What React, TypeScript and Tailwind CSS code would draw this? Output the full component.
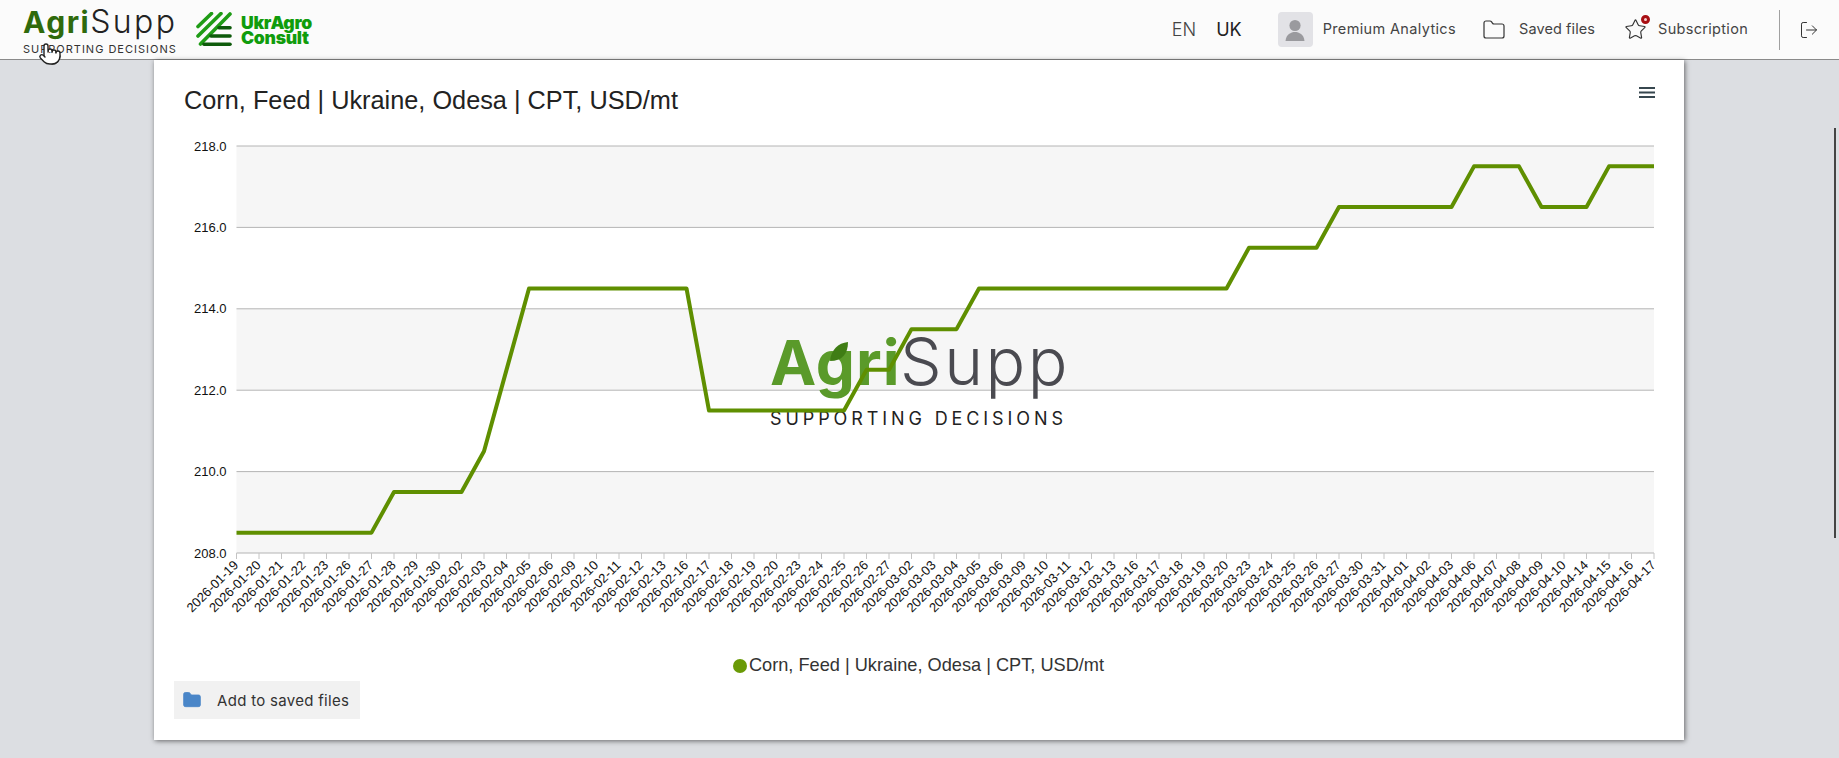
import { Pointer, LogOut, Folder, Star } from 'lucide-react';

const dates = [
  '2026-01-19', '2026-01-20', '2026-01-21', '2026-01-22', '2026-01-23', '2026-01-26', '2026-01-27', '2026-01-28',
  '2026-01-29', '2026-01-30', '2026-02-02', '2026-02-03', '2026-02-04', '2026-02-05', '2026-02-06', '2026-02-09',
  '2026-02-10', '2026-02-11', '2026-02-12', '2026-02-13', '2026-02-16', '2026-02-17', '2026-02-18', '2026-02-19',
  '2026-02-20', '2026-02-23', '2026-02-24', '2026-02-25', '2026-02-26', '2026-02-27', '2026-03-02', '2026-03-03',
  '2026-03-04', '2026-03-05', '2026-03-06', '2026-03-09', '2026-03-10', '2026-03-11', '2026-03-12', '2026-03-13',
  '2026-03-16', '2026-03-17', '2026-03-18', '2026-03-19', '2026-03-20', '2026-03-23', '2026-03-24', '2026-03-25',
  '2026-03-26', '2026-03-27', '2026-03-30', '2026-03-31', '2026-04-01', '2026-04-02', '2026-04-03', '2026-04-06',
  '2026-04-07', '2026-04-08', '2026-04-09', '2026-04-10', '2026-04-14', '2026-04-15', '2026-04-16', '2026-04-17',
];

const values = [
  208.5, 208.5, 208.5, 208.5, 208.5, 208.5, 208.5, 209.5, 209.5, 209.5, 209.5, 210.5, 212.5, 214.5, 214.5, 214.5,
  214.5, 214.5, 214.5, 214.5, 214.5, 211.5, 211.5, 211.5, 211.5, 211.5, 211.5, 211.5, 212.5, 212.5, 213.5, 213.5,
  213.5, 214.5, 214.5, 214.5, 214.5, 214.5, 214.5, 214.5, 214.5, 214.5, 214.5, 214.5, 214.5, 215.5, 215.5, 215.5,
  215.5, 216.5, 216.5, 216.5, 216.5, 216.5, 216.5, 217.5, 217.5, 217.5, 216.5, 216.5, 216.5, 217.5, 217.5, 217.5,
];

// chart area, relative to the svg (svg starts at card left edge)
const plotLeft = 82.5;
const plotRight = 1500;
const plotTop = 16;
const plotBottom = 423;
const stepX = (plotRight - plotLeft) / (dates.length - 1);
const yOf = (v: number) => plotBottom - ((v - 208) / 10) * (plotBottom - plotTop);
const linePoints = values.map((v, i) => `${plotLeft + i * stepX},${yOf(v)}`).join(' ');
const axisLabels = [218, 216, 214, 212, 210, 208];

function Chart() {
  return (
    <svg width="1530" height="523" className="block" fontFamily="'Liberation Sans', Arial, sans-serif">
      {[218, 214, 210].map((v) => (
        <rect key={v} x={plotLeft} y={yOf(v)} width={plotRight - plotLeft} height={(plotBottom - plotTop) / 5} fill="#f6f6f6" />
      ))}
      {axisLabels.map((v) => (
        <g key={v}>
          <line x1={plotLeft} x2={plotRight} y1={yOf(v)} y2={yOf(v)} stroke="#b4b4b4" strokeWidth="1" />
          <text x={plotLeft - 10} y={yOf(v) + 4.5} textAnchor="end" fontSize="13" fill="#111">
            {v.toFixed(1)}
          </text>
        </g>
      ))}
      {dates.map((d, i) => {
        const x = plotLeft + i * stepX;
        return (
          <g key={d}>
            <line x1={x} x2={x} y1={plotBottom} y2={plotBottom + 6} stroke="#c4c4c4" strokeWidth="1" />
            <text x={x + 2.5} y={plotBottom + 13} textAnchor="end" fontSize="13" fill="#111" transform={`rotate(-45 ${x + 2.5} ${plotBottom + 13})`}>
              {d}
            </text>
          </g>
        );
      })}

      {/* watermark sits under the line */}
      <g fontFamily="Inter, sans-serif">
        <text x="616" y="255" fontSize="62" fontWeight="700" letterSpacing="1" fill="#5a9a2a">Agri</text>
        <text x="746" y="255" fontSize="66" fontWeight="300" letterSpacing="2.5" fill="#4a4a50">Supp</text>
        <text x="616" y="295" fontSize="18" letterSpacing="3.9" fill="#222">SUPPORTING DECISIONS</text>
      </g>
      <path d="M676 231 C677 220 684 213 694 212 C694 224 688 231 676 231 Z" fill="#3f7d14" />

      <polyline points={linePoints} fill="none" stroke="#5f8f00" strokeWidth="4" strokeLinejoin="round" />
    </svg>
  );
}

function Logo() {
  return (
    <div className="relative w-[153px] shrink-0 font-['Inter',sans-serif]">
      <div className="flex h-[34px] items-end whitespace-nowrap leading-[34px]">
        <span className="text-[30px] font-bold tracking-[1.5px] text-[#2f6a0c]">Agri</span>
        <span className="text-[32px] font-light tracking-[2.4px] text-[#222]">Supp</span>
      </div>
      <div className="mt-[4px] whitespace-nowrap text-[11px] leading-[12px] tracking-[1px] text-[#333]">
        SUPPORTING DECISIONS
      </div>
    </div>
  );
}

function UkrAgroLogo() {
  return (
    <div className="flex shrink-0 items-center gap-[9px]">
      <svg width="36" height="36" viewBox="0 0 36 36">
        <path d="M2 14.5 L15.5 1.5" stroke="#1f9c16" strokeWidth="3.6" strokeLinecap="round" />
        <path d="M2 24 L25 1.5" stroke="#1f9c16" strokeWidth="3.6" strokeLinecap="round" />
        <path d="M4.5 32 L34 2" stroke="#1f9c16" strokeWidth="3.6" strokeLinecap="round" />
        <path d="M23 15.7 H34" stroke="#0d5a0a" strokeWidth="3.6" strokeLinecap="round" />
        <path d="M15 24 H34" stroke="#0d5a0a" strokeWidth="3.6" strokeLinecap="round" />
        <path d="M8 32.3 H34" stroke="#0d5a0a" strokeWidth="3.6" strokeLinecap="round" />
      </svg>
      <div className="font-['Inter',sans-serif] text-[17.6px] font-black leading-[15px] tracking-[-0.3px] text-[#109c0c]">
        <div>UkrAgro</div>
        <div>Consult</div>
      </div>
    </div>
  );
}

export default function App() {
  return (
    <div className="relative h-[758px] w-[1839px] overflow-hidden bg-[#dcdee2] font-['Inter',sans-serif]">
      <header className="flex h-[60px] items-center border-b border-[#8a8a8a] bg-[#fbfbfb] pl-[23px] pr-[20px]">
        <div className="flex items-center gap-[20px]">
          <Logo />
          <UkrAgroLogo />
        </div>
        <div className="ml-auto flex items-center">
          <span className="text-[18px] font-light text-[#444]">EN</span>
          <span className="ml-[20px] text-[18px] text-[#222]">UK</span>
          <div className="ml-[36px] flex h-[35px] w-[35px] items-center justify-center rounded-[4px] bg-[#e2e2e6]">
            <svg width="24" height="26" viewBox="0 0 24 26">
              <circle cx="12" cy="8.5" r="5.6" fill="#9a9a9e" />
              <path d="M2.5 24 C3 17.5 8 15 12 15 C16 15 21 17.5 21.5 24 Z" fill="#9a9a9e" />
            </svg>
          </div>
          <span className="-mt-[2px] ml-[10px] text-[14.5px] tracking-[0.35px] text-[#444]">Premium Analytics</span>
          <Folder className="ml-[26px] text-[#333]" size={24} strokeWidth={1.2} />
          <span className="-mt-[2px] ml-[13px] text-[14.5px] tracking-[0.1px] text-[#444]">Saved files</span>
          <div className="relative ml-[29px]">
            <Star className="text-[#333]" size={23} strokeWidth={1.2} />
            <span className="absolute -right-[3px] -top-[3px] h-[9px] w-[9px] rounded-full border-[3px] border-[#a80f14] bg-[#f5d0d0]" />
          </div>
          <span className="-mt-[2px] ml-[11px] text-[14.5px] tracking-[0.3px] text-[#444]">Subscription</span>
          <div className="ml-[31px] h-[40px] w-px bg-[#a0a0a0]" />
          <LogOut className="ml-[19px] text-[#333]" size={20} strokeWidth={1.2} />
        </div>
      </header>

      <main className="relative ml-[154px] h-[680px] w-[1530px] bg-white shadow-[1px_1px_5px_rgba(0,0,0,0.55)]">
        <div className="flex h-[70px] items-start justify-between pl-[30px] pr-[29px] pt-[25px]">
          <h1 className="font-['Liberation_Sans',sans-serif] text-[25.3px] leading-[30px] text-[#222]">
            Corn, Feed | Ukraine, Odesa | CPT, USD/mt
          </h1>
          <svg width="16" height="11" viewBox="0 0 16 11" className="mt-[2px]">
            <rect y="0" width="16" height="2" fill="#37474f" />
            <rect y="4.5" width="16" height="2" fill="#37474f" />
            <rect y="9" width="16" height="2" fill="#37474f" />
          </svg>
        </div>
        <Chart />
        <div className="flex h-[25px] items-center justify-center pr-[1px] font-['Liberation_Sans',sans-serif] text-[18.2px] text-[#333]">
          <span className="mr-[2px] h-[14px] w-[14px] rounded-full bg-[#6a9a06]" />
          Corn, Feed | Ukraine, Odesa | CPT, USD/mt
        </div>
        <button className="ml-[20px] mt-[3px] flex h-[38px] w-[186px] items-center bg-[#f1f1f1] pl-[8px] text-[15px] tracking-[0.3px] text-[#333]">
          <Folder className="text-[#4a86c8]" size={20} fill="#4a86c8" strokeWidth={1} />
          <span className="ml-[15px] mt-[2px]">Add to saved files</span>
        </button>
      </main>

      <div className="absolute right-[3px] top-[128px] h-[410px] w-[2px] bg-[#444]" />
      <Pointer className="absolute left-[38px] top-[42px] fill-white text-[#222]" size={24} strokeWidth={1.4} />
    </div>
  );
}
